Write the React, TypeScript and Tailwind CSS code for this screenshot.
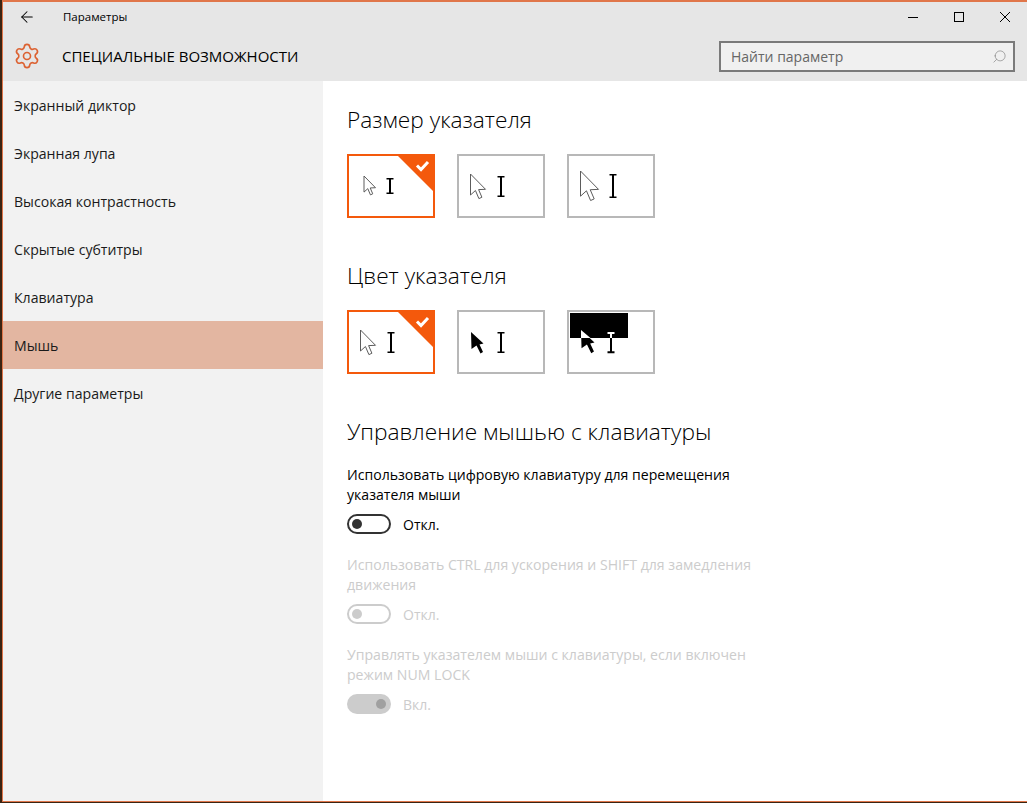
import { ArrowLeft, Search, Settings } from "lucide-react";

const font = { fontFamily: '"Open Sans", "Noto Sans", "Liberation Sans", sans-serif' };

const navItems = [
  "Экранный диктор",
  "Экранная лупа",
  "Высокая контрастность",
  "Скрытые субтитры",
  "Клавиатура",
  "Мышь",
  "Другие параметры",
];

const ARROW = "M0 0 L0 14 L3.3 11 L5.6 16.4 L7.6 15.5 L5.4 10.4 L10 10.2 Z";
const BLACK_ARROW = "M0 0 L12.5 11.5 L8.5 12.5 L12 20 L9.5 21.5 L5.5 13.5 L0.5 17 Z";

function Arrow({ x, y, scale }: { x: number; y: number; scale: number }) {
  return (
    <path
      d={ARROW}
      transform={`translate(${x} ${y}) scale(${scale})`}
      fill="#fff"
      stroke="#5c5c5c"
      strokeWidth={1 / scale}
    />
  );
}

function BlackArrow({ x, y, scale = 1 }: { x: number; y: number; scale?: number }) {
  return <path d={BLACK_ARROW} transform={`translate(${x} ${y}) scale(${scale})`} fill="#000" />;
}

function Beam({ x, y1, y2 }: { x: number; y1: number; y2: number }) {
  return (
    <g stroke="#000" fill="none">
      <path d={`M${x} ${y1 + 1} V${y2 - 1}`} strokeWidth={2} />
      <path d={`M${x - 3.5} ${y1 + 0.8} H${x + 3.5} M${x - 3.5} ${y2 - 0.8} H${x + 3.5}`} strokeWidth={1.6} />
    </g>
  );
}

function Tile({
  selected,
  children,
}: {
  selected?: boolean;
  children: React.ReactNode;
}) {
  return (
    <div
      className={`relative w-[88px] h-[64px] border-2 ${
        selected ? "border-[#f4590c]" : "border-[#b8b8b8]"
      }`}
    >
      <svg width="84" height="60" viewBox="0 0 84 60" className="block">
        {children}
      </svg>
      {selected && (
        <svg
          width="39"
          height="39"
          viewBox="0 0 39 39"
          className="absolute -top-[2px] -right-[2px]"
        >
          <path d="M0 0 H39 V39 Z" fill="#f4590c" />
          <path d="M21 11.5 L25 15.5 L32 8" stroke="#fff" strokeWidth="3" fill="none" />
        </svg>
      )}
    </div>
  );
}

function Toggle({ on, disabled }: { on?: boolean; disabled?: boolean }) {
  if (on) {
    return (
      <div className="flex items-center gap-3 h-[20px]">
        <div className="w-[44px] h-[20px] rounded-full bg-[#cccccc] flex items-center justify-end px-[5px]">
          <div className="size-[10px] rounded-full bg-[#a0a0a0]" />
        </div>
        <span className="text-[14px] text-[#cccccc]">Вкл.</span>
      </div>
    );
  }
  return (
    <div className="flex items-center gap-3 h-[20px]">
      <div
        className={`w-[44px] h-[20px] rounded-full border-2 flex items-center px-[3px] ${
          disabled ? "border-[#cccccc]" : "border-[#333333]"
        }`}
      >
        <div
          className={`size-[10px] rounded-full ${
            disabled ? "bg-[#cccccc]" : "bg-[#333333]"
          }`}
        />
      </div>
      <span className={`text-[14px] ${disabled ? "text-[#cccccc]" : "text-black"}`}>
        Откл.
      </span>
    </div>
  );
}

export default function App() {
  return (
    <div
      style={font}
      className="w-[1027px] h-[803px] overflow-hidden bg-[#3b2412] pl-[2px] pb-[1px] flex flex-col text-black"
    >
      <div className="flex-1 flex flex-col border-t-2 border-l border-b border-[#e0764a] bg-white min-h-0">
        <header className="h-[79px] bg-[#e6e6e6] shrink-0">
          <div className="h-[30px] flex items-center">
            <ArrowLeft className="ml-[15px] size-[18px]" strokeWidth={1.4} />
            <span className="ml-[27px] text-[11.5px]">Параметры</span>
            <div className="ml-auto flex items-center">
              <div className="w-[46px] flex justify-center">
                <div className="w-[10px] h-px bg-black" />
              </div>
              <div className="w-[46px] flex justify-center">
                <div className="size-[10px] border border-black" />
              </div>
              <div className="w-[46px] flex justify-center mr-[-1px]">
                <svg width="10" height="10" viewBox="0 0 10 10">
                  <path d="M0 0 L10 10 M10 0 L0 10" stroke="#000" strokeWidth="1" />
                </svg>
              </div>
            </div>
          </div>
          <div className="h-[49px] flex items-center pb-[1px]">
            <Settings className="ml-[10px] size-[28px] text-[#dc6232]" strokeWidth={1.4} />
            <span className="ml-[21px] text-[15px] font-medium">СПЕЦИАЛЬНЫЕ ВОЗМОЖНОСТИ</span>
            <div className="ml-auto mr-[12px] w-[296px] h-[31px] border-2 border-[#7a7a7a] bg-[#f0f0f0] flex items-center justify-between pl-[10px] pr-[6px]">
              <span className="text-[14px] text-[#666666]">Найти параметр</span>
              <Search className="size-[15px] text-[#7a7a7a] -scale-x-100" strokeWidth={1} />
            </div>
          </div>
        </header>

        <div className="flex-1 flex min-h-0">
          <nav className="w-[320px] bg-[#f2f2f2] shrink-0">
            {navItems.map((item) => (
              <div
                key={item}
                className={`h-[48px] flex items-center pl-[11px] pt-[1px] text-[14.1px] text-[#1a1a1a] ${
                  item === "Мышь" ? "bg-[#e3b6a1]" : ""
                }`}
              >
                {item}
              </div>
            ))}
          </nav>

          <main className="flex-1 pl-[24px] pt-[25px]">
            <h2 className="text-[22.7px] leading-[28px] text-black font-light">Размер указателя</h2>
            <div className="mt-[20px] flex gap-[22px]">
              <Tile selected>
                <Arrow x={15} y={20} scale={1.15} />
                <Beam x={41} y1={22} y2={38} />
              </Tile>
              <Tile>
                <Arrow x={11.5} y={18} scale={1.5} />
                <Beam x={42} y1={20} y2={41} />
              </Tile>
              <Tile>
                <Arrow x={11.5} y={15} scale={1.8} />
                <Beam x={44} y1={18} y2={42} />
              </Tile>
            </div>

            <h2 className="mt-[44px] text-[22.7px] leading-[28px] text-black font-light">Цвет указателя</h2>
            <div className="mt-[20px] flex gap-[22px]">
              <Tile selected>
                <Arrow x={11.5} y={18} scale={1.5} />
                <Beam x={42} y1={20} y2={41} />
              </Tile>
              <Tile>
                <BlackArrow x={12} y={20} />
                <Beam x={42} y1={20} y2={41} />
              </Tile>
              <Tile>
                <rect x="1" y="1" width="58" height="25" fill="#000" />
                <BlackArrow x={12} y={18} scale={1.08} />
                <path d="M12 18 L21.5 26 L12 26 Z" fill="#fff" />
                <path d="M42 26 V40 M38.5 40.2 H45.5" stroke="#000" strokeWidth="2" />
                <path d="M38.5 21 H45.5 M42 21 V26" stroke="#fff" strokeWidth="2" />
              </Tile>
            </div>

            <h2 className="mt-[44px] text-[22.7px] leading-[28px] text-black font-light">
              Управление мышью с клавиатуры
            </h2>
            <p className="mt-[19px] text-[14.1px] leading-[20px]">
              Использовать цифровую клавиатуру для перемещения
              <br />
              указателя мыши
            </p>
            <div className="mt-[9px]">
              <Toggle />
            </div>
            <p className="mt-[21px] text-[14.1px] leading-[20px] text-[#cccccc]">
              Использовать CTRL для ускорения и SHIFT для замедления
              <br />
              движения
            </p>
            <div className="mt-[9px]">
              <Toggle disabled />
            </div>
            <p className="mt-[21px] text-[14.1px] leading-[20px] text-[#cccccc]">
              Управлять указателем мыши с клавиатуры, если включен
              <br />
              режим NUM LOCK
            </p>
            <div className="mt-[9px]">
              <Toggle on />
            </div>
          </main>
        </div>
      </div>
    </div>
  );
}
